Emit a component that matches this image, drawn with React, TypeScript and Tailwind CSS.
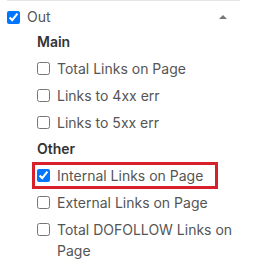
import { useState } from 'react'

type Item = { label: string; checked?: boolean; highlight?: boolean }

const groups: { title: string; items: Item[] }[] = [
  {
    title: 'Main',
    items: [
      { label: 'Total Links on Page' },
      { label: 'Links to 4xx err' },
      { label: 'Links to 5xx err' },
    ],
  },
  {
    title: 'Other',
    items: [
      { label: 'Internal Links on Page', checked: true, highlight: true },
      { label: 'External Links on Page' },
      { label: 'Total DOFOLLOW Links on Page' },
    ],
  },
]

function Option({ item }: { item: Item }) {
  const [checked, setChecked] = useState(!!item.checked)
  return (
    <label
      className={
        item.highlight
          ? '-ml-[5px] flex w-[186px] items-start gap-[7px] border-[3px] border-[#d7202a] pl-[2px]'
          : 'flex items-start gap-[7px] py-[3px]'
      }
    >
      <input
        type="checkbox"
        checked={checked}
        onChange={() => setChecked(!checked)}
        className="m-0 mt-[4px] h-[13px] w-[13px] shrink-0"
      />
      <span className="text-[14px] leading-[21px] text-[#555]">{item.label}</span>
    </label>
  )
}

export default function App() {
  const [open, setOpen] = useState(true)
  return (
    <div className="h-[262px] w-[253px] overflow-hidden bg-white font-['Inter',sans-serif]">
      <div className="ml-[7px] w-[233px] border-t border-[#e5e5e5]">
        <div className="flex items-center pt-[5px] pb-[1px]">
          <input
            type="checkbox"
            defaultChecked
            className="m-0 h-[13px] w-[13px] shrink-0"
          />
          <span className="ml-[7px] text-[14px] leading-[22px] text-[#555]">Out</span>
          <button
            onClick={() => setOpen(!open)}
            className="ml-auto mr-[12px] flex h-[10px] w-[10px] items-center justify-center"
          >
            <svg width="8" height="4" viewBox="0 0 8 4">
              <path d="M0 4 L4 0 L8 4 Z" fill="#777" />
            </svg>
          </button>
        </div>
        {open && (
          <div className="pl-[30px]">
            {groups.map((g) => (
              <div key={g.title}>
                <div className="py-[2px] text-[14px] leading-[22px] font-semibold text-[#333]">
                  {g.title}
                </div>
                {g.items.map((it) => (
                  <Option key={it.label} item={it} />
                ))}
              </div>
            ))}
          </div>
        )}
      </div>
    </div>
  )
}
